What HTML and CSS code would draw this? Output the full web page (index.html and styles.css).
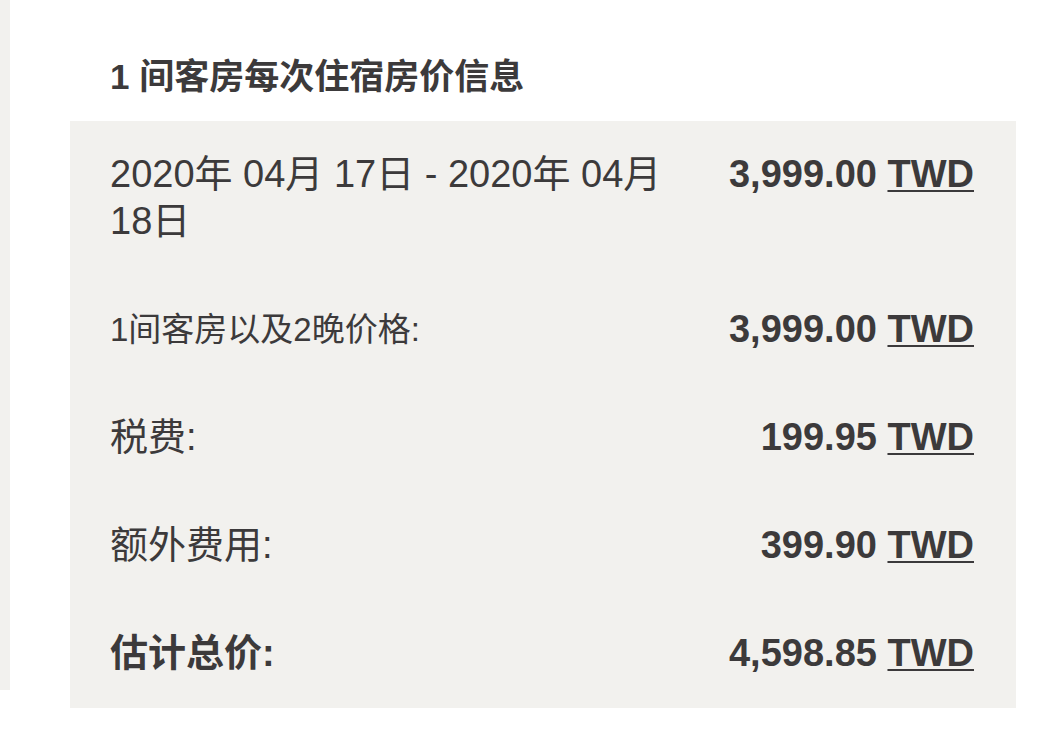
FILE: index.html
```html
<!DOCTYPE html>
<html lang="zh-CN">
<head>
<meta charset="utf-8">
<link rel="stylesheet" href="styles.css">
</head>
<body>
<div class="page">
  <aside class="strip"></aside>
  <main class="content">
    <h2 class="title">1 间客房每次住宿房价信息</h2>
    <section class="box">
      <div class="row">
        <div class="label">2020年 04月 17日 - 2020年 04月 18日</div>
        <div class="value">3,999.00 <a class="cur">TWD</a></div>
      </div>
      <div class="row">
        <div class="label label-compact">1间客房以及2晚价格:</div>
        <div class="value">3,999.00 <a class="cur">TWD</a></div>
      </div>
      <div class="row">
        <div class="label">税费:</div>
        <div class="value">199.95 <a class="cur">TWD</a></div>
      </div>
      <div class="row">
        <div class="label">额外费用:</div>
        <div class="value">399.90 <a class="cur">TWD</a></div>
      </div>
      <div class="row total">
        <div class="label">估计总价:</div>
        <div class="value">4,598.85 <a class="cur">TWD</a></div>
      </div>
    </section>
  </main>
</div>
<div class="strip2"></div>
</body>
</html>
```

FILE: styles.css
```css
html, body {
  margin: 0;
  padding: 0;
  background: #ffffff;
}
body {
  font-family: "Liberation Sans", "Noto Sans CJK SC", sans-serif;
  color: #3c3a3b;
}
.page {
  display: flex;
  align-items: flex-start;
}
.strip {
  width: 10px;
  height: 690px;
  background: #f2f1ee;
  flex: none;
}
.strip2 {
  width: 10px;
  height: 10px;
  margin-top: 41px;
  background: #f2f1ee;
}
.content {
  padding-left: 60px;
  width: 946px;
}
.title {
  margin: 57px 0 24px 40px;
  font-size: 35px;
  line-height: 40px;
  font-weight: 700;
}
.box {
  background: #f2f1ee;
  padding: 30px 42px 31px 40px;
  display: flex;
  flex-direction: column;
  gap: 61px;
}
.row {
  display: flex;
  justify-content: space-between;
  align-items: flex-start;
  gap: 40px;
  font-size: 38px;
  line-height: 47px;
}
.label {
  flex: 1;
}
.label-compact {
  font-size: 33px;
}
.value {
  font-weight: 700;
  white-space: nowrap;
}
.total .label {
  font-weight: 700;
}
.cur {
  text-decoration: underline;
  text-decoration-thickness: 2px;
  text-underline-offset: 3px;
}
```
